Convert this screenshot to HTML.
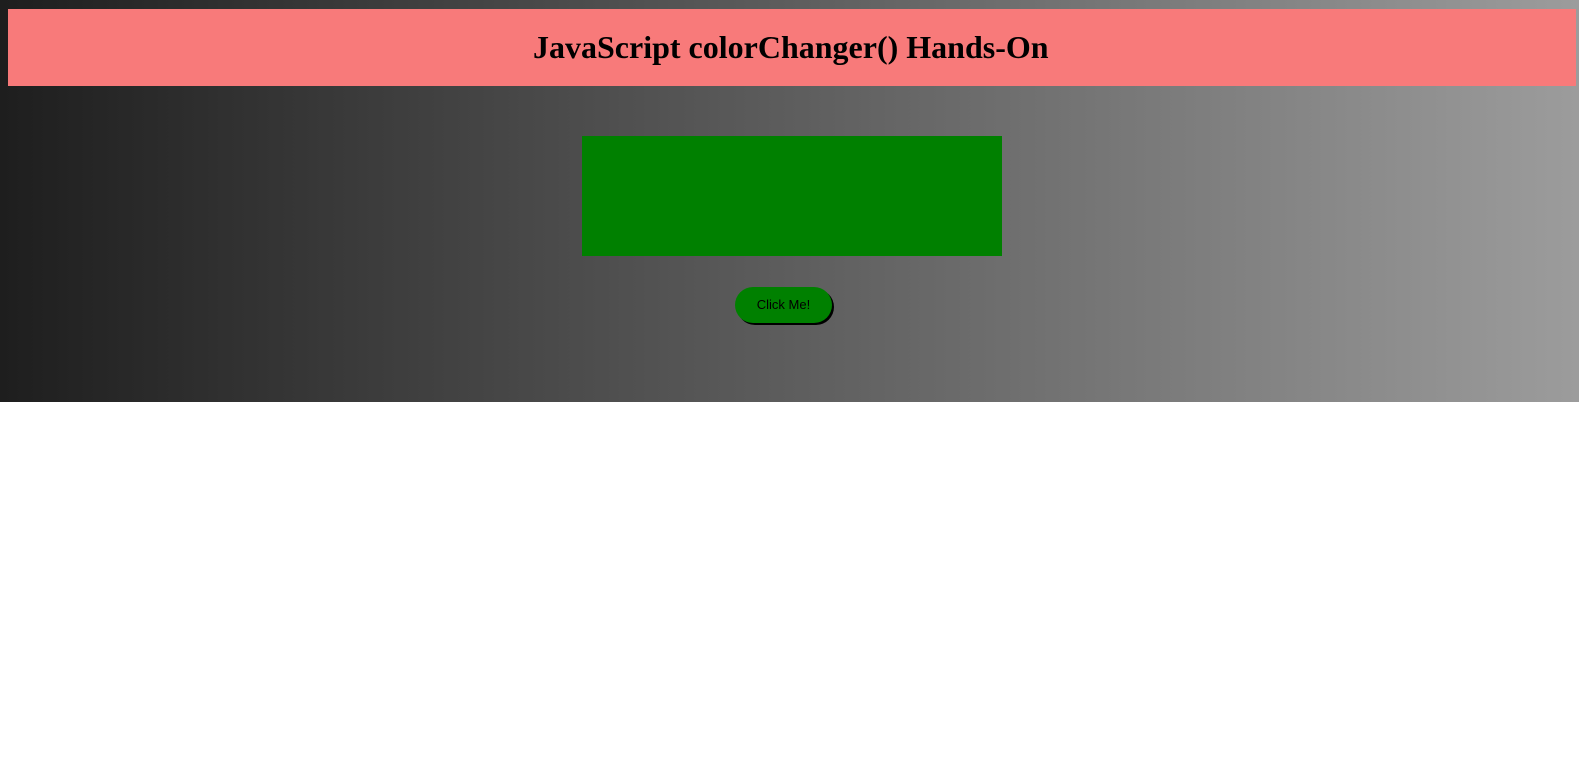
<!DOCTYPE html>
<html><head><style>
html,body{margin:0;padding:0;background:#fff;width:1588px;height:771px;overflow:hidden}
#bg{position:absolute;left:0;top:0;width:1579px;height:402px;background:linear-gradient(to right,#1e1e1e,#9c9c9c)}
#hdr{position:absolute;left:8px;top:9px;width:1568px;height:77px;background:#f87a7a}
#hdr span{position:absolute;left:525px;top:20px;white-space:nowrap;font:bold 32px "Liberation Serif",serif;color:#000}
#box{position:absolute;left:582px;top:136px;width:420px;height:120px;background:#008000}
#btn{position:absolute;left:735px;top:287px;width:97px;height:36px;background:#008000;border-radius:18px;box-shadow:2px 2px 0 #000;font:13px "Liberation Sans",sans-serif;color:#000;text-align:center;line-height:36px}
</style></head><body>
<div id="bg"></div>
<div id="hdr"><span>JavaScript colorChanger() Hands-On</span></div>
<div id="box"></div>
<div id="btn">Click Me!</div>
</body></html>
